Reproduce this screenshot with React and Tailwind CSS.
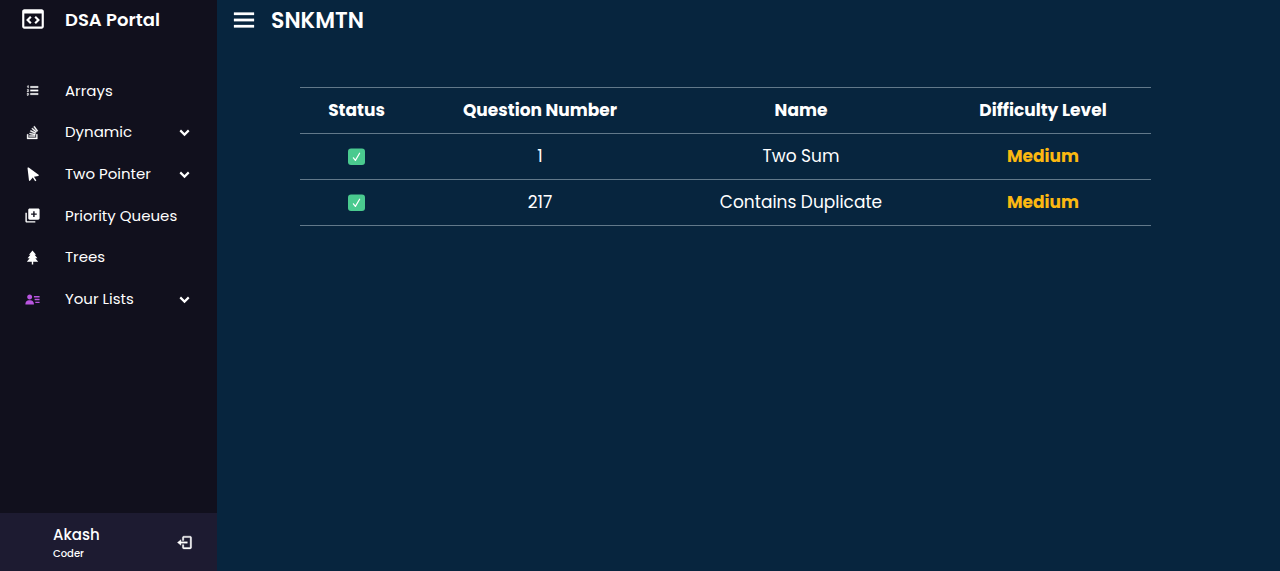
import React from "react";
import {
  BiCodeBlock,
  BiListOl,
  BiLogOut,
  BiLogoStackOverflow,
  BiMenu,
  BiSolidAddToQueue,
  BiSolidChevronDown,
  BiSolidPointer,
  BiSolidTree,
  BiSolidUserDetail,
} from "react-icons/bi";

const links = [
  { label: "Arrays", Icon: BiListOl, iconClass: "stroke-current stroke-[0.4]" },
  { label: "Dynamic", Icon: BiLogoStackOverflow, iconClass: "stroke-current stroke-[0.5]", expandable: true },
  { label: "Two Pointer", Icon: BiSolidPointer, expandable: true },
  { label: "Priority Queues", Icon: BiSolidAddToQueue },
  { label: "Trees", Icon: BiSolidTree },
  { label: "Your Lists", Icon: BiSolidUserDetail, iconClass: "text-[#b955e0]", expandable: true },
];

const questions = [
  { number: 1, name: "Two Sum", difficulty: "Medium" },
  { number: 217, name: "Contains Duplicate", difficulty: "Medium" },
];

function Solved() {
  return (
    <svg viewBox="0 0 17 17" className="mx-auto size-[17px]" role="img" aria-label="Solved">
      <rect y="0.5" width="17" height="16.5" rx="3" fill="#4aca8f" />
      <path d="M5.4 9.8 7.4 12.4 11.6 5.2" fill="none" stroke="#fff" strokeWidth="1.2" strokeLinecap="round" strokeLinejoin="round" />
    </svg>
  );
}

function Sidebar() {
  return (
    <aside className="flex w-[217px] shrink-0 flex-col bg-[#11101d]">
      <div className="flex h-[38px] items-center">
        <span className="flex w-[65px] justify-center">
          <BiCodeBlock className="size-[26px]" />
        </span>
        <span className="text-[18px] font-semibold">DSA Portal</span>
      </div>
      <nav className="mt-8">
        <ul className="grid h-[250px] grid-rows-6">
          {links.map(({ label, Icon, iconClass = "", expandable }) => (
            <li key={label} className="flex items-center">
              <a href="#" className="flex flex-1 items-center">
                <span className="flex w-[65px] justify-center">
                  <Icon className={`size-[17px] ${iconClass}`} />
                </span>
                <span className="text-[15px]">{label}</span>
              </a>
              {expandable && (
                <button type="button" aria-label={`Expand ${label}`} className="mr-6 flex">
                  <BiSolidChevronDown className="size-[17px]" />
                </button>
              )}
            </li>
          ))}
        </ul>
      </nav>
      <div className="mt-auto flex h-[58px] items-center justify-between bg-[#1d1b31] pr-6 pl-[53px]">
        <div>
          <div className="text-[15px] leading-6 font-medium">Akash</div>
          <div className="text-[10px] leading-[14px] font-medium">Coder</div>
        </div>
        <button type="button" aria-label="Log out" className="flex">
          <BiLogOut className="size-[17px] stroke-current stroke-[0.5]" />
        </button>
      </div>
    </aside>
  );
}

export default function App() {
  return (
    <div className="flex min-h-screen bg-[#07253e] font-[Poppins,Inter,sans-serif] text-white">
      <Sidebar />
      <main className="min-w-0 flex-1">
        <header className="flex h-10 items-center gap-3 pl-3">
          <button type="button" aria-label="Toggle menu" className="flex">
            <BiMenu className="size-[30px] stroke-current stroke-[0.2]" />
          </button>
          <h1 className="text-[22px] font-semibold">SNKMTN</h1>
        </header>
        <table className="mt-[47px] ml-[83px] w-4/5 table-fixed border-collapse text-center text-[17px]">
          <colgroup>
            <col className="w-[113px]" />
            <col className="w-[254px]" />
            <col className="w-[268px]" />
            <col className="w-[216px]" />
          </colgroup>
          <thead>
            <tr className="h-[46px] border-y border-[#62798a]">
              <th className="font-bold">Status</th>
              <th className="font-bold">Question Number</th>
              <th className="font-bold">Name</th>
              <th className="font-bold">Difficulty Level</th>
            </tr>
          </thead>
          <tbody>
            {questions.map((q) => (
              <tr key={q.number} className="h-[46px] border-b border-[#62798a]">
                <td><Solved /></td>
                <td>{q.number}</td>
                <td>{q.name}</td>
                <td className="font-bold text-[#fbb811]">{q.difficulty}</td>
              </tr>
            ))}
          </tbody>
        </table>
      </main>
    </div>
  );
}
